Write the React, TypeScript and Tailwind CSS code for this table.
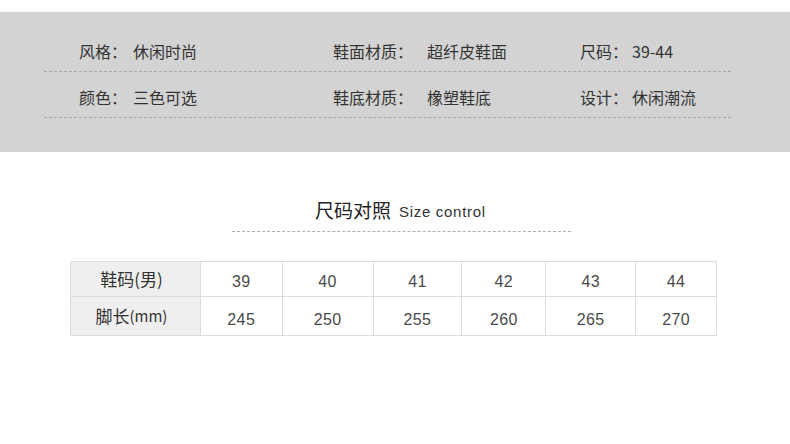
import React from "react";

const cjk = { fontFamily: '"Noto Sans CJK SC", "Liberation Sans", sans-serif' };
const latin = { fontFamily: '"Liberation Sans", Arial, sans-serif' };

function Row({ items }: { items: [string, string][] }) {
  const widths = ["w-[254px]", "w-[247px]", "flex-1"];
  const labelW = ["w-[54px]", "w-[94px]", "w-[52px]"];
  return (
    <div className="h-[46px] border-b border-dashed border-[#a8a8a8] flex pl-[35px] pt-[15px]">
      {items.map(([k, v], i) => (
        <div key={i} className={`${widths[i]} flex text-[16px] leading-[20px] text-[#333]`}>
          <span className={`${labelW[i]} shrink-0`}>{k}</span>
          <span>{v}</span>
        </div>
      ))}
    </div>
  );
}

export default function App() {
  const sizes = ["39", "40", "41", "42", "43", "44"];
  const lens = ["245", "250", "255", "260", "265", "270"];
  const colW = ["w-[82px]", "w-[91px]", "w-[89px]", "w-[84px]", "w-[90px]", "w-[80px]"];
  return (
    <div className="w-[790px] h-[444px] bg-white overflow-hidden" style={cjk}>
      <div className="mt-[12px] h-[140px] bg-[#d3d3d3] pt-[14px]">
        <div className="ml-[44px] w-[687px]">
          <Row items={[["风格：", "休闲时尚"], ["鞋面材质：", "超纤皮鞋面"], ["尺码：", "39-44"]]} />
          <Row items={[["颜色：", "三色可选"], ["鞋底材质：", "橡塑鞋底"], ["设计：", "休闲潮流"]]} />
        </div>
      </div>

      <div className="mt-[45px] flex items-end pl-[315px] h-[26px]">
        <span className="text-[19px] leading-[26px] text-[#222]">尺码对照</span>
        <span className="ml-[8px] text-[15px] leading-[22px] tracking-[0.7px] text-[#333]" style={latin}>
          Size control
        </span>
      </div>
      <div className="ml-[232px] w-[339px] mt-[8px] border-t border-dashed border-[#b0b0b0]" />

      <div className="ml-[70px] mt-[29px] w-[647px] border border-[#dcdcdc]">
        <div className="flex h-[35px] border-b border-[#dcdcdc]">
          <div className="w-[130px] bg-[#efefef] border-r border-[#dcdcdc] flex items-center justify-center text-[17px] text-[#333] pr-[8px]">
            鞋码(男)
          </div>
          {sizes.map((s, i) => (
            <div
              key={s}
              className={`${colW[i]} ${i < 5 ? "border-r border-[#dcdcdc]" : ""} flex items-center justify-center pt-[5px] text-[16px] tracking-[0.4px] text-[#4a4a4a]`}
              style={latin}
            >
              {s}
            </div>
          ))}
        </div>
        <div className="flex h-[38px]">
          <div className="w-[130px] bg-[#efefef] border-r border-[#dcdcdc] flex items-center justify-center text-[17px] text-[#333] pr-[8px]">
            脚长<span className="text-[15px]">(mm)</span>
          </div>
          {lens.map((s, i) => (
            <div
              key={s}
              className={`${colW[i]} ${i < 5 ? "border-r border-[#dcdcdc]" : ""} flex items-center justify-center pt-[8px] text-[16px] tracking-[0.4px] text-[#4a4a4a]`}
              style={latin}
            >
              {s}
            </div>
          ))}
        </div>
      </div>
    </div>
  );
}
